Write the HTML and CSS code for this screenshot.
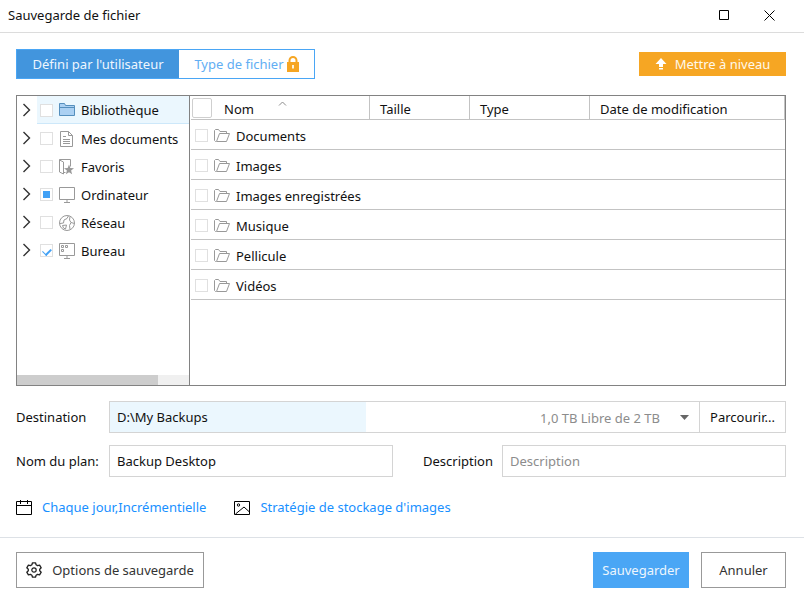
FILE: index.html
```
<!DOCTYPE html>
<html lang="fr">
<head>
  <meta charset="UTF-8" />
  <meta name="viewport" content="width=device-width, initial-scale=1.0"/>
  <title>Sauvegarde de fichier</title>
  <link rel="stylesheet" href="styles.css">
</head>
<body>
  <svg width="0" height="0" class="defs" aria-hidden="true">
    <symbol id="chevron" viewBox="0 0 10 14"><path d="M1.500 1L7.500 7l-6 6" fill="none" stroke="#333" stroke-width="1.400"/></symbol>
    <symbol id="folder-open" viewBox="0 0 16 14"><path d="M2 12.500H1.500l-1-1v-10l1-1h3l1.500 2h6.500v2M2.500 12.500l3-8h10l-3 8z" fill="none" stroke="#999"/></symbol>
  </svg>

  <header class="titlebar">
    <h1>Sauvegarde de fichier</h1>
    <div class="window-buttons">
      <button type="button" aria-label="Agrandir">
        <svg width="11" height="11" viewBox="0 0 11 11"><path d="M.5.5h9v9h-9z" fill="none" stroke="#000"/></svg>
      </button>
      <button type="button" aria-label="Fermer">
        <svg width="11" height="11" viewBox="0 0 11 11"><path d="M.5.5l10 10M10.500.5l-10 10" stroke="#000"/></svg>
      </button>
    </div>
  </header>

  <main>
    <div class="toolbar">
      <div class="tabs">
        <button type="button" class="tab active">Défini par l'utilisateur</button>
        <button type="button" class="tab">Type de fichier
          <svg width="12" height="16" viewBox="0 0 12 16"><path d="M2.500 7V4.500a3.500 3.500 0 0 1 7 0V7" fill="none" stroke="#f6a623" stroke-width="2"/><path d="M0 6h12v10H0z" fill="#f6a623"/><path d="M5 9h2v3.500H5z" fill="#fff3d8"/></svg>
        </button>
      </div>
      <button type="button" class="upgrade">
        <svg width="12" height="12" viewBox="0 0 12 12"><path d="M6 0l5.500 6H8v3H4V6H.5zM4 10h4v1.500H4z" fill="#fff"/></svg>
        Mettre à niveau
      </button>
    </div>

    <div class="browser">
      <div class="tree">
        <ul>
          <li class="selected">
            <button type="button" class="expand" aria-label="Développer"><svg width="10" height="14"><use href="#chevron"/></svg></button>
            <label><input type="checkbox" />
              <svg width="16" height="16" viewBox="0 0 16 16"><path d="M.5 13.500v-12h5l1 2h9v10z" fill="#abd0f2" stroke="#558fbd"/><path d="M.5 5.500h15" stroke="#558fbd"/></svg>
              Bibliothèque</label>
          </li>
          <li>
            <button type="button" class="expand" aria-label="Développer"><svg width="10" height="14"><use href="#chevron"/></svg></button>
            <label><input type="checkbox" />
              <svg width="16" height="16" viewBox="0 0 16 16"><path d="M1.500.5h8l4 4v11h-12zM9.500.5v4h4M4 5.500h3M4 8.500h7M4 10.500h7M4 12.500h7" fill="none" stroke="#999"/></svg>
              Mes documents</label>
          </li>
          <li>
            <button type="button" class="expand" aria-label="Développer"><svg width="10" height="14"><use href="#chevron"/></svg></button>
            <label><input type="checkbox" />
              <svg width="16" height="16" viewBox="0 0 16 16"><path d="M.5.5h11v7M.5.5v12.500l4 2v-12l-4-2M4.500 13.500h2" fill="none" stroke="#999"/><path d="M10 5.500l1.300 3.500 3.700.2-2.900 2.300 1 3.800-3.100-2.100-3.100 2.100 1-3.800L5 9.200l3.700-.2z" fill="#999"/></svg>
              Favoris</label>
          </li>
          <li>
            <button type="button" class="expand" aria-label="Développer"><svg width="10" height="14"><use href="#chevron"/></svg></button>
            <label><input type="checkbox" class="partial" />
              <svg width="16" height="16" viewBox="0 0 16 16"><path d="M.5.5h15v12H.5zM8 12.500v3M5 15.500h6" fill="none" stroke="#999"/></svg>
              Ordinateur</label>
          </li>
          <li>
            <button type="button" class="expand" aria-label="Développer"><svg width="10" height="14"><use href="#chevron"/></svg></button>
            <label><input type="checkbox" />
              <svg width="16" height="16" viewBox="0 0 16 16"><circle cx="8" cy="8" r="7.500" fill="none" stroke="#999"/><path d="M9.500.8L8 3.500l-3 1.500L4.500 8 1 8.500M11 1.500L10.500 5l1.500 2.500 3.500 1M12 7.500l-1.500 3 .5 4M3.500 10.500l4-.5-1 4-2-1z" fill="none" stroke="#999"/></svg>
              Réseau</label>
          </li>
          <li>
            <button type="button" class="expand" aria-label="Développer"><svg width="10" height="14"><use href="#chevron"/></svg></button>
            <label><input type="checkbox" checked />
              <svg width="16" height="16" viewBox="0 0 16 16"><path d="M.5.5h15v12H.5zM8 12.500v3M5 15.500h6M2.500 2.500h2v2h-2zM6.500 2.500h2v2h-2zM2.500 6.500h2v2h-2z" fill="none" stroke="#999"/></svg>
              Bureau</label>
          </li>
        </ul>
        <div class="scrollbar"><div class="thumb"></div></div>
      </div>

      <div class="files">
        <table>
          <thead>
            <tr>
              <th class="col-name">
                <div class="cell">
                  <input type="checkbox" class="check-all" aria-label="Tout sélectionner" />
                  <span>Nom</span>
                  <svg class="sort" width="9" height="5" viewBox="0 0 9 5"><path d="M1 4.500l3.500-3.500L8 4.500" fill="none" stroke="#8c8c8c"/></svg>
                </div>
              </th>
              <th class="col-size">Taille</th>
              <th class="col-type">Type</th>
              <th>Date de modification</th>
            </tr>
          </thead>
          <tbody>
            <tr><td colspan="4"><label><input type="checkbox" /><svg width="16" height="14"><use href="#folder-open"/></svg>Documents</label></td></tr>
            <tr><td colspan="4"><label><input type="checkbox" /><svg width="16" height="14"><use href="#folder-open"/></svg>Images</label></td></tr>
            <tr><td colspan="4"><label><input type="checkbox" /><svg width="16" height="14"><use href="#folder-open"/></svg>Images enregistrées</label></td></tr>
            <tr><td colspan="4"><label><input type="checkbox" /><svg width="16" height="14"><use href="#folder-open"/></svg>Musique</label></td></tr>
            <tr><td colspan="4"><label><input type="checkbox" /><svg width="16" height="14"><use href="#folder-open"/></svg>Pellicule</label></td></tr>
            <tr><td colspan="4"><label><input type="checkbox" /><svg width="16" height="14"><use href="#folder-open"/></svg>Vidéos</label></td></tr>
          </tbody>
        </table>
      </div>
    </div>

    <div class="form-row">
      <label class="field-label" for="destination">Destination</label>
      <div class="destination">
        <select id="destination" name="destination">
          <option>D:\My Backups</option>
        </select>
        <span class="free-space">1,0 TB Libre de 2 TB</span>
        <svg class="arrow" width="9" height="5" viewBox="0 0 9 5"><path d="M0 0h9L4.500 5z" fill="#666"/></svg>
      </div>
      <button type="button" class="browse">Parcourir...</button>
    </div>

    <div class="form-row">
      <label class="field-label" for="plan">Nom du plan:</label>
      <input type="text" id="plan" name="plan" value="Backup Desktop" />
      <label class="desc-label" for="description">Description</label>
      <input type="text" id="description" name="description" placeholder="Description" />
    </div>

    <div class="links">
      <a href="#planification">
        <svg width="17" height="17" viewBox="0 0 17 17"><path d="M.5 2.500h15v13H.5zM.5 6.500h15M4.500 1v4M11.500 1v4" fill="none" stroke="#000"/></svg>
        Chaque jour,Incrémentielle
      </a>
      <a href="#strategie">
        <svg width="17" height="17" viewBox="0 0 17 17"><path d="M.5 2.500h15v13H.5zM1.500 15l8.500-7 5.500 5" fill="none" stroke="#000"/><circle cx="4.500" cy="6" r="1.200" fill="none" stroke="#000"/></svg>
        Stratégie de stockage d'images
      </a>
    </div>
  </main>

  <footer>
    <button type="button" class="btn options">
      <svg width="16" height="16" viewBox="0 0 16 16"><path d="M6.500.8h3l.6 2 1.400.8 2.100-.5 1.600 2.700L13.700 7.300v1.400l1.500 1.500-1.600 2.700-2.100-.5-1.400.8-.6 2h-3l-.6-2-1.400-.8-2.100.5L.8 10.200l1.500-1.500V7.300L.8 5.800l1.600-2.700 2.100.5 1.400-.8z" fill="none" stroke="#222" stroke-width="1.300" stroke-linejoin="round"/><circle cx="8" cy="8" r="2.200" fill="none" stroke="#222" stroke-width="1.200"/></svg>
      Options de sauvegarde
    </button>
    <button type="submit" class="btn primary">Sauvegarder</button>
    <button type="button" class="btn cancel">Annuler</button>
  </footer>
</body>
</html>
```
FILE: styles.css
```
:root {
  --blue: #4aa6f5;
  --blue-dark: #4295dd;
  --link: #1890ff;
  --orange: #f6a623;
  --border: #d4d4d4;
  --frame: #828282;
  --line: #c3c3c3;
  --light: #ebf7fe;
}

* {
  box-sizing: border-box;
}

body {
  margin: 0;
  min-height: 100vh;
  display: flex;
  flex-direction: column;
  background: white;
  color: #111;
  font-family: "Noto Sans", "Open Sans", sans-serif;
  font-size: 13px;
  line-height: 18px;
}

.defs {
  position: absolute;
}

svg {
  flex: none;
  display: block;
}

button,
input,
select {
  font: inherit;
  color: inherit;
  margin: 0;
}

button {
  padding: 0;
  border: none;
  background: none;
  white-space: nowrap;
  cursor: pointer;
}

/* Title bar */
.titlebar {
  display: flex;
  justify-content: space-between;
  align-items: center;
  height: 33px;
  padding: 0 12px 2px 8px;
  border-bottom: 1px solid #dcdcdc;
}

h1 {
  margin: 0;
  font-size: 13px;
  font-weight: 400;
}

.window-buttons {
  display: flex;
}

.window-buttons button {
  display: flex;
  align-items: center;
  justify-content: center;
  width: 45px;
  height: 30px;
}

main {
  flex: 1;
  display: flex;
  flex-direction: column;
  padding: 16px 18px 21px 16px;
}

/* Tabs */
.toolbar {
  display: flex;
  justify-content: space-between;
  align-items: center;
  margin-bottom: 16px;
}

.tabs {
  display: flex;
  border: 1px solid var(--blue);
}

.tab {
  display: flex;
  align-items: center;
  justify-content: center;
  gap: 3px;
  width: 135px;
  height: 28px;
  color: #62aef3;
}

.tab.active {
  width: 162px;
  background: var(--blue-dark);
  color: #eef6fd;
}

.upgrade {
  display: flex;
  align-items: center;
  justify-content: center;
  gap: 8px;
  width: 147px;
  height: 24px;
  background: var(--orange);
  color: #fff8ea;
}

/* Checkboxes */
input[type="checkbox"] {
  appearance: none;
  flex: none;
  display: grid;
  place-items: center;
  width: 13px;
  height: 13px;
  border: 1px solid #e0e0e0;
  background: white;
}

input.partial::before {
  content: "";
  width: 7px;
  height: 7px;
  background: #42a1f5;
}

input:checked::before {
  content: "";
  width: 7px;
  height: 4px;
  border-left: 1px solid #42a1f5;
  border-bottom: 2px solid #42a1f5;
  transform: rotate(-45deg);
}

/* File browser */
.browser {
  flex: 1;
  display: flex;
  border: 1px solid var(--frame);
  margin-bottom: 15px;
}

.tree {
  display: flex;
  flex-direction: column;
  justify-content: space-between;
  width: 173px;
  border-right: 1px solid var(--frame);
}

.tree ul {
  list-style: none;
  margin: 0;
  padding: 0;
}

.tree li {
  display: flex;
  height: 28px;
}

.expand {
  display: flex;
  align-items: center;
  width: 20px;
  padding-left: 5px;
}

.tree label {
  flex: 1;
  display: flex;
  align-items: center;
  gap: 6px;
  padding: 1px 0 0 3px;
  white-space: nowrap;
}

.tree .selected label {
  background: var(--light);
  border-bottom: 1px solid #cde8fa;
}

.scrollbar {
  height: 10px;
  background: #f0f0f0;
}

.thumb {
  width: 82%;
  height: 10px;
  background: #cdcdcd;
}

.files {
  flex: 1;
  padding-left: 1px;
}

table {
  width: 100%;
  table-layout: fixed;
  border-collapse: separate;
  border-spacing: 0;
}

th {
  height: 24px;
  padding: 2px 0 0 10px;
  border-right: 1px solid var(--line);
  border-bottom: 1px solid var(--line);
  font-weight: 400;
  text-align: left;
}

.col-name {
  width: 179px;
  padding: 1px 0 0 1px;
}

.col-size {
  width: 100px;
}

.col-type {
  width: 120px;
}

.cell {
  display: flex;
  align-items: center;
  gap: 12px;
}

.cell span {
  padding-top: 2px;
}

.cell .check-all {
  width: 20px;
  height: 20px;
  border-color: #cfcfcf;
  border-radius: 2px;
}

.sort {
  align-self: flex-start;
  margin: 3px 0 0 12px;
}

td {
  height: 30px;
  padding: 2px 4px 0;
  border-bottom: 1px solid var(--line);
}

td label {
  display: flex;
  align-items: center;
  gap: 6px;
}

/* Form */
.form-row {
  display: flex;
  align-items: center;
  height: 32px;
  margin-bottom: 12px;
}

.field-label {
  width: 93px;
  white-space: nowrap;
}

.destination {
  flex: 1;
  position: relative;
}

.destination select {
  appearance: none;
  display: block;
  width: 100%;
  height: 32px;
  padding: 0 7px;
  border: 1px solid var(--border);
  border-radius: 0;
  background: linear-gradient(to right, var(--light) 43.5%, white 43.5%);
}

.free-space {
  position: absolute;
  top: 8px;
  right: 40px;
  color: #8c8c8c;
  pointer-events: none;
}

.arrow {
  position: absolute;
  top: 14px;
  right: 11px;
  pointer-events: none;
}

.browse {
  width: 86px;
  height: 32px;
  border: 1px solid var(--border);
  border-left: none;
}

input[type="text"] {
  flex: 1;
  min-width: 0;
  height: 32px;
  padding: 0 7px;
  border: 1px solid var(--border);
}

input::placeholder {
  color: #8c8c8c;
}

.desc-label {
  width: 109px;
  padding-left: 30px;
}

/* Links */
.links {
  display: flex;
  gap: 28px;
  padding-top: 9px;
}

.links a {
  display: flex;
  align-items: center;
  gap: 9px;
  color: var(--link);
  text-decoration: none;
}

/* Footer */
footer {
  display: flex;
  gap: 12px;
  padding: 14px 18px 10px 16px;
  border-top: 1px solid #dde1e6;
}

.btn {
  width: 85px;
  height: 36px;
  border: 1px solid #999;
  color: #333;
}

.options {
  display: flex;
  align-items: center;
  justify-content: center;
  gap: 10px;
  width: 188px;
  margin-right: auto;
}

.primary {
  width: 96px;
  border: none;
  background: var(--blue);
  color: #eef6fd;
}
```
